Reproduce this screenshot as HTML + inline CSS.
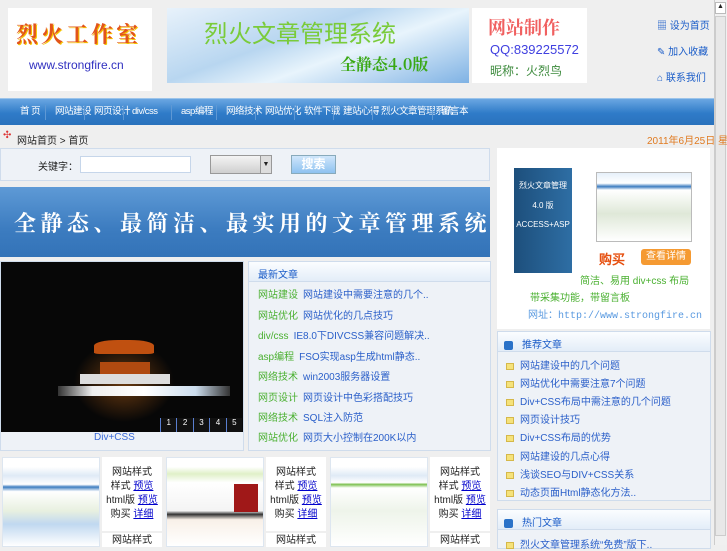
<!DOCTYPE html>
<html><head><meta charset="utf-8"><style>
*{margin:0;padding:0;box-sizing:border-box}
body{width:727px;height:545px;overflow:hidden;background:#efefef;font:11px "Liberation Sans","Noto Sans CJK SC",sans-serif;color:#222;position:relative}
.a{position:absolute}
.nav{left:0;top:98px;width:714px;height:27px;background:linear-gradient(#6aa6e2,#2f7bc8 55%,#2a72bd);border-top:1px solid #9cc4ea}
.nav span{position:absolute;top:6px;line-height:14px;color:#fff;font-size:9.5px;letter-spacing:-0.5px;white-space:nowrap}
.nav em{position:absolute;top:6px;width:1px;height:15px;background:#5e98d4}
.box{background:#eef2f7;border:1px solid #cfdcec}
.news div{position:absolute;left:9px;font-size:10px;color:#2a5fc9;white-space:nowrap}
.news b{color:#4ab030;font-weight:normal;margin-right:5px}
.lst div{position:absolute;left:8px;font-size:10px;color:#2a5fc9;white-space:nowrap}
.lst i{display:inline-block;width:8px;height:7px;background:#f5e27a;border:1px solid #d5b84a;margin-right:6px;vertical-align:middle}
.th{background:#fff;border:1px solid #dde6f0}
.tt{background:#fff;text-align:center;font-size:10px;line-height:14px;padding-top:9px;white-space:nowrap}
.tt u{color:#00c}
</style></head><body>
<div class="a" style="left:8px;top:8px;width:144px;height:83px;background:#fff"></div>
<div class="a" style="left:16px;top:18px;font:bold 22px 'Noto Serif CJK SC',serif;color:#e2541c;letter-spacing:3px;text-shadow:1px 1px 0 #f5c400">烈火工作室</div>
<div class="a" style="left:29px;top:58px;font-size:12px;color:#3030c0">www.strongfire.cn</div>
<div class="a" style="left:167px;top:8px;width:302px;height:75px;background:linear-gradient(160deg,#e8f2fb 0%,#b8d6f0 40%,#e8f4fc 60%,#7fb2e4 100%)"></div>
<div class="a" style="left:204px;top:14px;font-size:24px;color:#7acb3a">烈火文章管理系统</div>
<div class="a" style="left:340px;top:52px;font:bold 16px 'Noto Serif CJK SC',serif;color:#3aa814">全静态4.0版</div>
<div class="a" style="left:472px;top:8px;width:115px;height:75px;background:#fff"></div>
<div class="a" style="left:488px;top:14px;font:bold 18px 'Noto Serif CJK SC',serif;color:#f06060">网站制作</div>
<div class="a" style="left:490px;top:42px;font-size:13px;color:#4040e0">QQ:839225572</div>
<div class="a" style="left:490px;top:62px;font-size:12px;color:#3c8a3c">昵称：火烈鸟</div>
<div class="a" style="left:657px;top:17px;color:#1a5cc8;font-size:10px">▦ 设为首页</div>
<div class="a" style="left:657px;top:43px;color:#1a5cc8;font-size:10px">✎ 加入收藏</div>
<div class="a" style="left:657px;top:69px;color:#1a5cc8;font-size:10px">⌂ 联系我们</div>
<div class="a" style="left:714px;top:0;width:13px;height:545px;background:#f0f0f0;border-left:1px solid #ccc"></div>
<div class="a" style="left:715px;top:2px;width:11px;height:12px;background:#fff;border:1px solid #bbb;font-size:7px;text-align:center">▲</div>
<div class="a" style="left:715px;top:16px;width:11px;height:520px;background:#e8e8e8;border:1px solid #ccc"></div>
<div class="a nav">
<span style="left:20px">首 页</span><em style="left:45px"></em><span style="left:55px">网站建设</span><em style="left:84px"></em><span style="left:94px">网页设计</span><em style="left:123px"></em><span style="left:132px">div/css</span><em style="left:171px"></em><span style="left:181px">asp编程</span><em style="left:216px"></em><span style="left:226px">网络技术</span><em style="left:255px"></em><span style="left:265px">网站优化</span><em style="left:294px"></em><span style="left:304px">软件下载</span><em style="left:333px"></em><span style="left:343px">建站心得</span><em style="left:372px"></em><span style="left:381px">烈火文章管理系统</span><em style="left:432px"></em><span style="left:441px">留言本</span>
</div>
<div class="a" style="left:3px;top:130px;color:#d33;font-size:10px">✣</div>
<div class="a" style="left:17px;top:132px;font-size:10px">网站首页 &gt; 首页</div>
<div class="a" style="left:647px;top:132px;font-size:10px;color:#e07a20;white-space:nowrap">2011年6月25日 星</div>
<div class="a box" style="left:0;top:148px;width:490px;height:33px"></div>
<div class="a" style="left:38px;top:158px;font-size:10px">关键字：</div>
<div class="a" style="left:80px;top:156px;width:111px;height:17px;background:#fff;border:1px solid #c6d6ea"></div>
<div class="a" style="left:210px;top:155px;width:62px;height:19px;background:linear-gradient(#f4f4f4,#cfcfcf);border:1px solid #999"></div>
<div class="a" style="left:260px;top:156px;width:11px;height:17px;background:#ddd;border-left:1px solid #999;font-size:7px;text-align:center;line-height:17px">▼</div>
<div class="a" style="left:291px;top:155px;width:45px;height:19px;background:linear-gradient(#cfe6fb,#8ec2f0);border:1px solid #8ab;color:#fff;text-align:center;font-weight:bold;font-size:12px;line-height:17px">搜索</div>
<div class="a" style="left:0;top:187px;width:490px;height:70px;background:linear-gradient(#5e9ad6,#3c7cc0 60%,#3373b8)"></div>
<div class="a" style="left:14px;top:207px;font:bold 22px 'Noto Serif CJK SC',serif;color:#fff;letter-spacing:4.5px;white-space:nowrap">全静态、最简洁、最实用的文章管理系统</div>
<div class="a box" style="left:0;top:261px;width:244px;height:190px"></div>
<div class="a" style="left:1px;top:262px;width:242px;height:170px;background:radial-gradient(ellipse 50px 40px at 123px 120px,#6a3a10,transparent),#070707"></div>
<div class="a" style="left:94px;top:340px;width:60px;height:14px;background:#c05010;border-radius:40% 40% 10% 10%"></div>
<div class="a" style="left:100px;top:362px;width:50px;height:12px;background:#b04a10"></div>
<div class="a" style="left:80px;top:374px;width:90px;height:10px;background:#ddd"></div>
<div class="a" style="left:58px;top:386px;width:172px;height:10px;background:linear-gradient(90deg,#333,#eee 20%,#fff 50%,#cde 80%,#333)"></div>
<div class="a" style="left:160px;top:418px;width:82px;height:14px;display:flex;font-size:8px;color:#fff">
<div style="flex:1;background:#111;border-left:1px solid #5a7fd0;text-align:center">1</div><div style="flex:1;background:#111;border-left:1px solid #5a7fd0;text-align:center">2</div><div style="flex:1;background:#111;border-left:1px solid #5a7fd0;text-align:center">3</div><div style="flex:1;background:#111;border-left:1px solid #5a7fd0;text-align:center">4</div><div style="flex:1;background:#111;border-left:1px solid #5a7fd0;text-align:center">5</div></div>
<div class="a" style="left:94px;top:432px;color:#3a6ad8;font-size:10px">Div+CSS</div>
<div class="a box news" style="left:248px;top:261px;width:243px;height:190px">
<div style="left:0;top:0;width:241px;height:20px;background:linear-gradient(#fbfdff,#e3edf8);border-bottom:1px solid #cfdcec"></div>
<div style="top:4px;color:#1a5cc8">最新文章</div>
<div style="top:24px"><b>网站建设</b>网站建设中需要注意的几个..</div>
<div style="top:45px"><b>网站优化</b>网站优化的几点技巧</div>
<div style="top:65px"><b>div/css</b>IE8.0下DIVCSS兼容问题解决..</div>
<div style="top:86px"><b>asp编程</b>FSO实现asp生成html静态..</div>
<div style="top:106px"><b>网络技术</b>win2003服务器设置</div>
<div style="top:127px"><b>网页设计</b>网页设计中色彩搭配技巧</div>
<div style="top:147px"><b>网络技术</b>SQL注入防范</div>
<div style="top:167px"><b>网站优化</b>网页大小控制在200K以内</div>
</div>
<div class="a" style="left:497px;top:148px;width:213px;height:181px;background:#fff"></div>
<div class="a" style="left:514px;top:168px;width:58px;height:105px;background:linear-gradient(90deg,#1d4f7c,#2e6ea4);color:#fff;font-size:8px;text-align:center;padding-top:12px">烈火文章管理<br><br>4.0 版<br><br>ACCESS+ASP</div>
<div class="a" style="left:596px;top:172px;width:96px;height:70px;background:linear-gradient(#e6f0fa,#fff 15%,#3c7cc0 20%,#fff 25%,#dfe8d8 60%,#fff);border:1px solid #bbb"></div>
<div class="a" style="left:599px;top:249px;font:bold 13px sans-serif;color:#e65010">购买</div>
<div class="a" style="left:641px;top:249px;width:50px;height:16px;background:#f59a32;border-radius:3px;color:#fff;font-size:10px;text-align:center;line-height:16px">查看详情</div>
<div class="a" style="left:580px;top:272px;color:#4ab030;font-size:10px;white-space:nowrap">简洁、易用 div+css 布局</div>
<div class="a" style="left:530px;top:289px;color:#4ab030;font-size:10px">带采集功能，带留言板</div>
<div class="a" style="left:528px;top:306px;color:#5a9ae0;font:10px 'Liberation Mono','Noto Sans CJK SC',monospace;white-space:nowrap">网址：http://www.strongfire.cn</div>
<div class="a box lst" style="left:497px;top:331px;width:214px;height:170px">
<div style="left:0;top:0;width:212px;height:20px;background:linear-gradient(#fbfdff,#e3edf8);border-bottom:1px solid #cfdcec"></div>
<div style="top:4px;left:6px;color:#1a5cc8"><span style="display:inline-block;width:9px;height:9px;background:#2a72c8;border-radius:2px;margin-right:9px;vertical-align:middle"></span>推荐文章</div>
<div style="top:25px"><i></i>网站建设中的几个问题</div>
<div style="top:43px"><i></i>网站优化中需要注意7个问题</div>
<div style="top:61px"><i></i>Div+CSS布局中需注意的几个问题</div>
<div style="top:79px"><i></i>网页设计技巧</div>
<div style="top:97px"><i></i>Div+CSS布局的优势</div>
<div style="top:116px"><i></i>网站建设的几点心得</div>
<div style="top:134px"><i></i>浅谈SEO与DIV+CSS关系</div>
<div style="top:152px"><i></i>动态页面Html静态化方法..</div>
</div>
<div class="a box lst" style="left:497px;top:509px;width:214px;height:40px">
<div style="left:0;top:0;width:212px;height:20px;background:linear-gradient(#fbfdff,#e3edf8);border-bottom:1px solid #cfdcec"></div>
<div style="top:4px;left:6px;color:#1a5cc8"><span style="display:inline-block;width:9px;height:9px;background:#2a72c8;border-radius:2px;margin-right:9px;vertical-align:middle"></span>热门文章</div>
<div style="top:26px"><i></i>烈火文章管理系统“免费”版下..</div>
</div>
<div class="a th" style="left:2px;top:457px;width:98px;height:90px;background:linear-gradient(#fff 10%,#dfeaf6 20%,#fff 30%,#3c7cc0 33%,#fff 38%,#e8f0e0 60%,#c0d8f0 75%,#fff)"></div>
<div class="a tt" style="left:102px;top:457px;width:60px;height:74px">网站样式<br>样式 <u>预览</u><br>html版 <u>预览</u><br>购买 <u>详细</u></div>
<div class="a tt" style="left:102px;top:533px;width:60px;height:14px;padding-top:1px">网站样式</div>
<div class="a th" style="left:166px;top:457px;width:98px;height:90px;background:linear-gradient(#fff 10%,#e0f0c8 18%,#fff 28%,#f4f4f4 60%,#333 64%,#f8f0e8 70%,#fff)"></div>
<div class="a" style="left:234px;top:484px;width:24px;height:28px;background:#a01818"></div>
<div class="a tt" style="left:266px;top:457px;width:60px;height:74px">网站样式<br>样式 <u>预览</u><br>html版 <u>预览</u><br>购买 <u>详细</u></div>
<div class="a tt" style="left:266px;top:533px;width:60px;height:14px;padding-top:1px">网站样式</div>
<div class="a th" style="left:330px;top:457px;width:98px;height:90px;background:linear-gradient(#fff 10%,#dfeaf6 20%,#fff 28%,#7cc050 30%,#fff 34%,#eef4ea 60%,#fff)"></div>
<div class="a tt" style="left:430px;top:457px;width:60px;height:74px">网站样式<br>样式 <u>预览</u><br>html版 <u>预览</u><br>购买 <u>详细</u></div>
<div class="a tt" style="left:430px;top:533px;width:60px;height:14px;padding-top:1px">网站样式</div>
</body></html>
